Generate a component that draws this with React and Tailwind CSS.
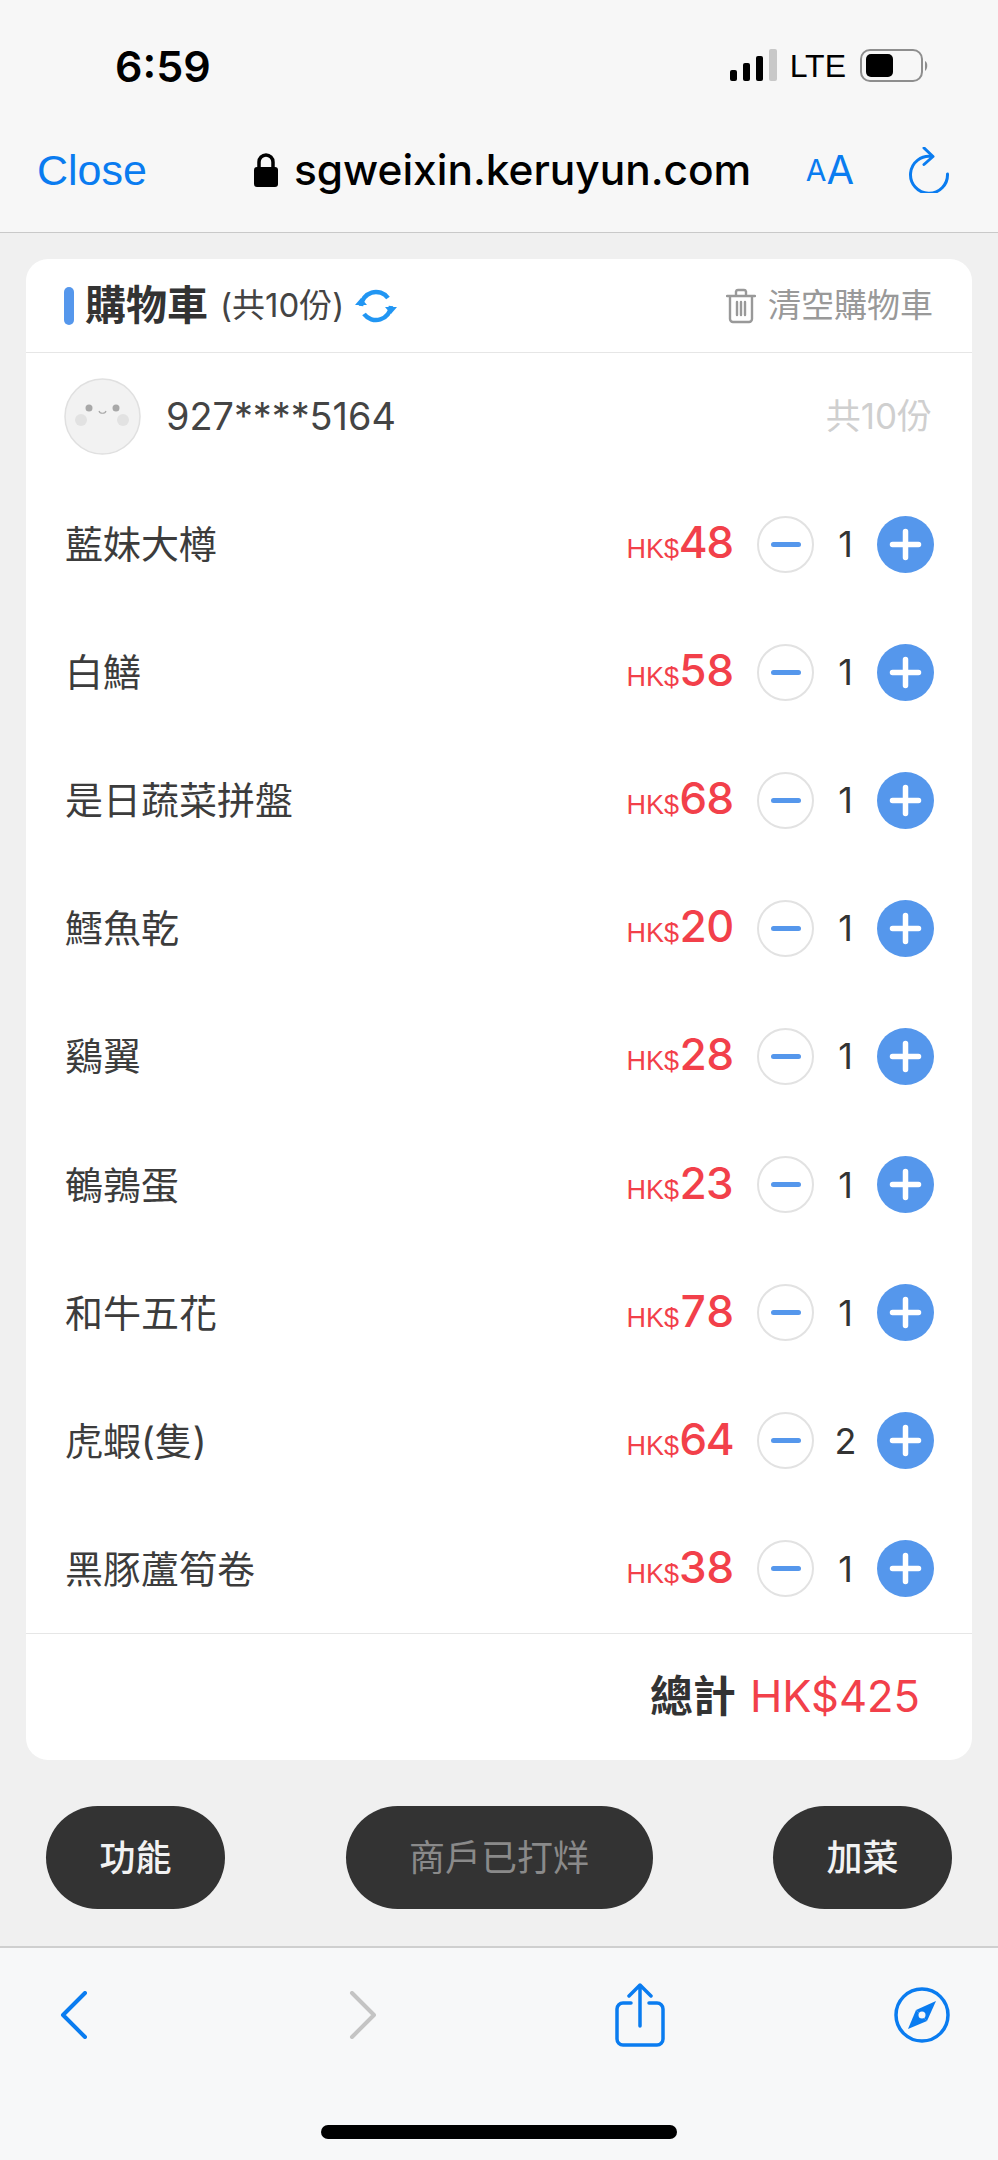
const items = [
  { name: "藍妹大樽", price: 48, qty: 1 },
  { name: "白鱔", price: 58, qty: 1 },
  { name: "是日蔬菜拼盤", price: 68, qty: 1 },
  { name: "鱈魚乾", price: 20, qty: 1 },
  { name: "鷄翼", price: 28, qty: 1 },
  { name: "鵪鶉蛋", price: 23, qty: 1 },
  { name: "和牛五花", price: 78, qty: 1 },
  { name: "虎蝦(隻)", price: 64, qty: 2 },
  { name: "黑豚蘆筍卷", price: 38, qty: 1 },
];

const font = "font-['Inter','Noto_Sans_CJK_TC',sans-serif]";
const arial = "font-['Liberation_Sans','Noto_Sans_CJK_TC',sans-serif]";

function StatusBar() {
  return (
    <div className="flex h-[120px] items-end justify-between pb-[24px] pl-[115px] pr-[68px]">
      <span className="text-[43px] font-semibold leading-[60px] text-black">6:59</span>
      <div className="flex h-[60px] items-center">
        <svg width="48" height="34" viewBox="0 0 48 34" className="mr-[12px]">
          <rect x="0" y="21" width="7" height="11" rx="2" fill="#000" />
          <rect x="13" y="14" width="7" height="18" rx="2" fill="#000" />
          <rect x="26" y="7" width="7" height="25" rx="2" fill="#000" />
          <rect x="39" y="0" width="8" height="32" rx="2" fill="#c8c8c8" />
        </svg>
        <span className={`text-[32px] leading-none text-black ${arial}`}>LTE</span>
        <svg width="70" height="34" viewBox="0 0 70 34" className="ml-[14px]">
          <rect x="1" y="1" width="61" height="31" rx="9" fill="none" stroke="#8e8e8e" strokeWidth="2" />
          <rect x="6" y="5" width="27" height="23" rx="5" fill="#000" />
          <path d="M65 12c3 1 3 8 0 10z" fill="#8e8e8e" />
        </svg>
      </div>
    </div>
  );
}

function AddressBar() {
  return (
    <div className="flex h-[113px] items-start border-b border-[#c9c9c9] pl-[37px] pr-[48px]">
      <span className={`w-[217px] text-[43px] leading-[100px] text-[#0a7cf0] ${arial}`}>Close</span>
      <div className="flex h-[100px] items-center">
        <svg width="24" height="34" viewBox="0 0 24 34">
          <path d="M5 15V9a7 7 0 0 1 14 0v6" fill="none" stroke="#000" strokeWidth="3.5" />
          <rect x="0" y="14" width="24" height="20" rx="3" fill="#000" />
        </svg>
        <span className="ml-[16px] text-[42.4px] font-medium leading-none text-black">sgweixin.keruyun.com</span>
      </div>
      <div className="ml-auto flex h-[100px] items-center">
        <span className="text-[30px] leading-none text-[#0a7cf0]">A</span>
        <span className="text-[40px] leading-none text-[#0a7cf0]">A</span>
        <svg width="42" height="46" viewBox="0 0 42 46" className="ml-[54px]">
          <path d="M24 9.5A18.5 18.5 0 1 0 39.5 27" fill="none" stroke="#0a7cf0" strokeWidth="3" strokeLinecap="round" />
          <path d="M16 1l9 8.5-9 8" fill="none" stroke="#0a7cf0" strokeWidth="3" strokeLinecap="round" strokeLinejoin="round" />
        </svg>
      </div>
    </div>
  );
}

function CartHeader() {
  return (
    <div className="flex h-[94px] items-center border-b border-[#e6e6e6] pl-[38px] pr-[39px]">
      <div className="h-[38px] w-[10px] rounded-full bg-[#5597ec]" />
      <span className="ml-[11px] text-[41px] font-bold leading-none text-[#333]">購物車</span>
      <span className="ml-[12px] text-[33px] leading-none text-[#444]">(共10份)</span>
      <svg width="44" height="38" viewBox="0 0 42 38" className="ml-[10px]">
        <path d="M6 19a15 15 0 0 1 27-8" fill="none" stroke="#2196f3" strokeWidth="4.5" />
        <path d="M36 19a15 15 0 0 1-27 8" fill="none" stroke="#2196f3" strokeWidth="4.5" />
        <path d="M0 18l6-7 6 7z" fill="#2196f3" />
        <path d="M30 20l6 7 6-7z" fill="#2196f3" />
      </svg>
      <svg width="30" height="36" viewBox="0 0 30 36" className="ml-auto">
        <path d="M1 8h28M10 7V3.5A2 2 0 0 1 12 2h6a2 2 0 0 1 2 1.500V7M4 9v22a3 3 0 0 0 3 3h16a3 3 0 0 0 3-3V9M11 14v13M15 14v13M19 14v13" fill="none" stroke="#999" strokeWidth="2.4" strokeLinecap="round" />
      </svg>
      <span className="ml-[12px] text-[33px] leading-none text-[#999]">清空購物車</span>
    </div>
  );
}

function UserRow() {
  return (
    <div className="flex h-[127px] items-center pl-[38px] pr-[40px]">
      <svg width="77" height="77" viewBox="0 0 77 77">
        <circle cx="38.500" cy="38.500" r="37.500" fill="#f2f2f2" stroke="#e0e0e0" strokeWidth="1.500" />
        <circle cx="25" cy="30" r="3.500" fill="#a8a8a8" />
        <circle cx="52" cy="30" r="3.500" fill="#a8a8a8" />
        <path d="M35 33c1 3 6 3 7 0" fill="none" stroke="#a8a8a8" strokeWidth="1.200" />
        <circle cx="17" cy="42" r="6" fill="#e2e2e2" />
        <circle cx="59" cy="42" r="6" fill="#e2e2e2" />
      </svg>
      <span className="ml-[25px] text-[37.8px] leading-none text-[#444]">927****5164</span>
      <span className="ml-auto text-[35px] leading-none text-[#cfcfcf]">共10份</span>
    </div>
  );
}

function CartRow({ name, price, qty }) {
  return (
    <div className="flex h-[128.1px] items-center pl-[39px] pr-[38px]">
      <span className="text-[38px] leading-none text-[#3c3c3c]">{name}</span>
      <span className="mb-[4px] ml-auto flex items-baseline text-[#f2404a]">
        <span className={`text-[27px] leading-none ${arial}`}>HK$</span>
        <span className="w-[52px] text-right text-[44px] font-medium leading-none tabular-nums tracking-[-1.5px]">{price}</span>
      </span>
      <div className="ml-[26px] flex h-[57px] w-[57px] items-center justify-center rounded-full border-2 border-[#e2e2e2]">
        <div className="h-[5px] w-[30px] rounded-full bg-[#5597ec]" />
      </div>
      <span className="w-[63px] text-center text-[36px] leading-none text-[#333]">{qty}</span>
      <svg width="57" height="57" viewBox="0 0 57 57">
        <circle cx="28.500" cy="28.500" r="28.500" fill="#5597ec" />
        <path d="M15.500 28.500h26M28.500 15.500v26" stroke="#fff" strokeWidth="5.500" strokeLinecap="round" />
      </svg>
    </div>
  );
}

function ActionButton({ label, className }) {
  return (
    <div className={`flex h-[103px] items-center justify-center rounded-[52px] bg-[#333] text-[36px] ${className}`}>
      {label}
    </div>
  );
}

function BottomBar() {
  return (
    <div className="flex h-[214px] flex-col border-t-2 border-[#cfcfcf] bg-[#f7f8f9]">
      <div className="flex h-[132px] items-center pt-[2px]">
        <svg width="28" height="48" viewBox="0 0 28 48" className="ml-[60px]">
          <path d="M25 2L3 24l22 22" fill="none" stroke="#0a7cf0" strokeWidth="4" strokeLinecap="round" strokeLinejoin="round" />
        </svg>
        <svg width="28" height="48" viewBox="0 0 28 48" className="ml-[261px]">
          <path d="M3 2l22 22L3 46" fill="none" stroke="#c4c4c4" strokeWidth="4" strokeLinecap="round" strokeLinejoin="round" />
        </svg>
        <svg width="50" height="64" viewBox="0 0 50 64" className="ml-[238px]">
          <path d="M16 20H8a6 6 0 0 0-6 6v30a6 6 0 0 0 6 6h34a6 6 0 0 0 6-6V26a6 6 0 0 0-6-6h-8" fill="none" stroke="#0a7cf0" strokeWidth="3.500" strokeLinecap="round" />
          <path d="M25 43V2M14 13L25 2l11 11" fill="none" stroke="#0a7cf0" strokeWidth="3.500" strokeLinecap="round" strokeLinejoin="round" />
        </svg>
        <svg width="56" height="56" viewBox="0 0 56 56" className="ml-[229px]">
          <circle cx="28" cy="28" r="26" fill="none" stroke="#0a7cf0" strokeWidth="3.500" />
          <path d="M42 14L33 34 22 23z" fill="#0a7cf0" />
          <path d="M14 42l8-19 11 11z" fill="#0a7cf0" />
          <circle cx="28" cy="28" r="3.500" fill="#f7f8f9" />
        </svg>
      </div>
      <div className="mt-[45px] h-[14px] w-[356px] self-center rounded-full bg-black" />
    </div>
  );
}

export default function App() {
  return (
    <div className={`flex h-[2160px] w-[998px] flex-col overflow-hidden bg-[#f0f0f0] ${font}`}>
      <div className="bg-[#f7f7f7]">
        <StatusBar />
        <AddressBar />
      </div>

      <div className="mx-[26px] mt-[26px] h-[1501px] rounded-[22px] bg-white">
        <CartHeader />
        <UserRow />
        {items.map((item) => (
          <CartRow key={item.name} {...item} />
        ))}
        <div className="flex h-[127px] items-center justify-end border-t border-[#e6e6e6] pr-[52px]">
          <span className="text-[43px] font-semibold leading-none text-[#333]">總計</span>
          <span className="ml-[14px] text-[43.5px] leading-none text-[#f2404a]">HK$425</span>
        </div>
      </div>

      <div className="mt-[46px] flex justify-between px-[46px]">
        <ActionButton label="功能" className="w-[179px] font-medium text-[#f2f2f2]" />
        <ActionButton label="商戶已打烊" className="w-[307px] text-[#8a8a8a]" />
        <ActionButton label="加菜" className="w-[179px] font-medium text-[#f2f2f2]" />
      </div>

      <div className="mt-auto">
        <BottomBar />
      </div>
    </div>
  );
}
